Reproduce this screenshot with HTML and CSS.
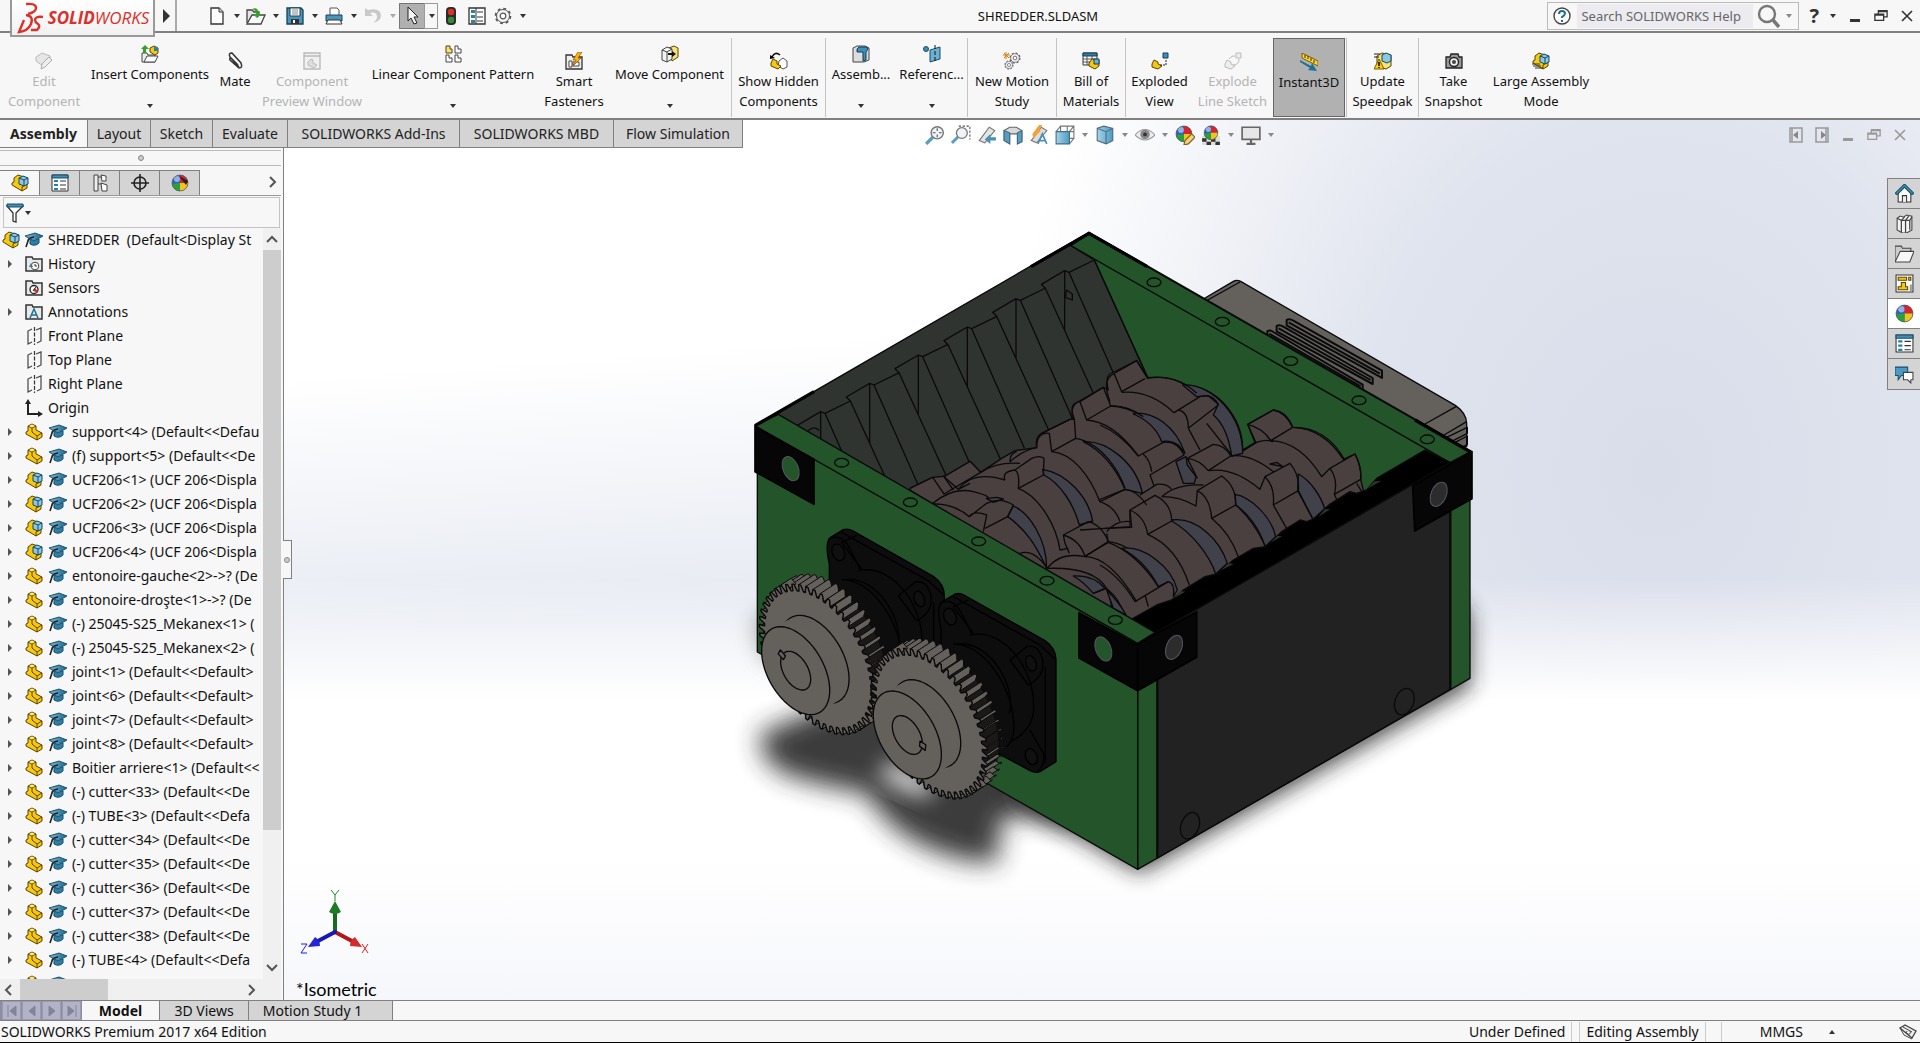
FILE: index.html
```html
<!DOCTYPE html>
<html lang="en">
<head>
<meta charset="utf-8">
<title>SHREDDER.SLDASM</title>
<link rel="stylesheet" href="styles.css">
</head>
<body>
<svg class="defs" aria-hidden="true">
  <defs>
    <linearGradient id="capg" x1="0" x2="1"><stop offset="0" stop-color="#7fb9d6"/><stop offset="1" stop-color="#1d6285"/></linearGradient>
    <linearGradient id="blueg" x1="0" x2="1"><stop offset="0" stop-color="#a9d3e8"/><stop offset="1" stop-color="#4d9bc2"/></linearGradient>
    <symbol id="part" viewBox="0 0 18 18"><path d="M1 9l2-1V3l4-2 4 2v4l6 3v4l-5 3L1 11z" fill="#f6c90e" stroke="#5b4300"/><path d="M3 3l4 2 4-2M7 5v4l5 4 5-3M12 13v4" fill="none" stroke="#5b4300"/><path d="M7 1.500l3 1.500-3 1.500L4 3z" fill="#ffe98a"/></symbol>
    <symbol id="assy" viewBox="0 0 18 18"><path d="M1 9l2-1V4l4-3 9 3v10l-5 3L1 11z" fill="#f6c90e" stroke="#5b4300"/><path d="M11 17v-4l5-3" fill="none" stroke="#5b4300"/><path d="M8 4l4-2 5 2v6l-4 2-5-2z" fill="#8ec7e2" stroke="#124863"/><path d="M8 4l5 2 4-2M13 6v6" fill="none" stroke="#124863"/></symbol>
    <symbol id="cap" viewBox="0 0 20 16"><path d="M6 7v5q5 3 9-1V7z" fill="#2e7ea6" stroke="#174f6c"/><path d="M1 4l10-3 8 3-9 5z" fill="url(#capg)" stroke="#1c5674"/><path d="M10 5Q4 6 4 9l-2 6" fill="none" stroke="#222" stroke-width="1.600"/></symbol>
    <symbol id="plane" viewBox="0 0 18 18"><path d="M7 2L3 4v13l4-2M11 3l5-2v13l-4 2" fill="none" stroke="#444" stroke-width="1.200"/><path d="M9.500 0v18" fill="none" stroke="#333" stroke-width="1.200" stroke-dasharray="4 1.500"/></symbol>
    <symbol id="folder" viewBox="0 0 18 18"><path d="M1 16V2h6l1 2h9v12z" fill="#e9e9e9" stroke="#333" stroke-width="1.500"/></symbol>
    <symbol id="list" viewBox="0 0 18 18"><path d="M1 1h16v16H1z" fill="#fff" stroke="#333"/><path d="M1 1h16v3H1z" fill="#3d8fb8" stroke="#174f6c"/><path d="M3 6h4v2H3zM3 10h4v2H3zM3 14h4v2H3z" fill="#2e7ea6"/><path d="M9 7h6M9 11h6M9 15h6" stroke="#333"/></symbol>
    <symbol id="ball" viewBox="0 0 18 18"><circle cx="9" cy="9" r="8" fill="#2b62c4"/><path d="M9 9V1a8 8 0 0 1 8 8z" fill="#d8232a"/><path d="M9 9h8a8 8 0 0 1-8 8z" fill="#f0c419"/><path d="M9 9v8a8 8 0 0 1-8-7z" fill="#2aa03a"/><circle cx="6" cy="5" r="3" fill="#fff" opacity=".5"/><circle cx="9" cy="9" r="8" fill="none" stroke="#555" stroke-width=".7"/></symbol>
    <symbol id="cog" viewBox="0 0 18 18"><circle cx="9" cy="9" r="6.500" fill="#f5f5f5" stroke="#555" stroke-width="1"/><circle cx="9" cy="9" r="7.500" fill="none" stroke="#555" stroke-width="1.600" stroke-dasharray="3 2.900"/><circle cx="9" cy="9" r="2.800" fill="#fff" stroke="#555" stroke-width="1.200"/></symbol>
    <symbol id="lens" viewBox="0 0 18 18"><path d="M1 17l6-6" stroke="#5b9cc0" stroke-width="3"/><circle cx="11" cy="7" r="5.500" fill="#eef3f7" stroke="#777" stroke-width="1.300"/></symbol>
    <symbol id="restore" viewBox="0 0 16 14"><path d="M5 4V1h10v7h-4M1 5h10v7H1zM1 6h10M5 2h10" fill="none" stroke="currentColor" stroke-width="1.500"/></symbol>
    <symbol id="cross" viewBox="0 0 12 12"><path d="M1 1l10 10M11 1L1 11" fill="none" stroke="currentColor" stroke-width="1.600"/></symbol>
    <symbol id="minus" viewBox="0 0 12 12"><path d="M1 9h10v3H1z" fill="currentColor"/></symbol>
  </defs>
</svg>

<header class="titlebar">
  <a class="logo" href="#" aria-label="SOLIDWORKS">
    <svg width="28" height="32" viewBox="0 0 28 32"><path d="M10 2q10-1 10 4 0 4-8 6M10 13q8 1 5 9-3 7-12 8l5-12" fill="none" stroke="#d8322b" stroke-width="2.400"/><path d="M27 15q-8-1-8 3 0 2 3 4t-1 6h-6" fill="none" stroke="#d8322b" stroke-width="2.400"/></svg>
    <span class="brand"><b>SOLID</b>WORKS</span>
  </a>
  <button class="more" aria-label="Show menu"><svg width="8" height="14"><path d="M1 0l7 7-7 7z" fill="#333"/></svg></button>
  <div class="quick">
    <button aria-label="New"><svg viewBox="0 0 18 18"><path d="M3 1h8l4 4v12H3z" fill="#fff" stroke="#333" stroke-width="1.300"/><path d="M11 1v4h4" fill="#ddd" stroke="#333"/></svg></button><i class="dd"></i>
    <button aria-label="Open"><svg viewBox="0 0 20 18"><path d="M1 16V3h5l2 2h5v3" fill="#e5e5e5" stroke="#444" stroke-width="1.300"/><path d="M1 17L6 8h13l-4 9z" fill="#fafafa" stroke="#444" stroke-width="1.300"/><path d="M6 2q6-3 7 5h3l-5 4-4-4h3q0-4-4-5z" fill="#35a02b"/></svg></button><i class="dd"></i>
    <button aria-label="Save"><svg viewBox="0 0 18 18"><path d="M1 1h14l2 2v14H1z" fill="#4c93ba" stroke="#16425a" stroke-width="1.300"/><path d="M4 1h10v8H4z" fill="#fff" stroke="#16425a"/><path d="M6 3h6M6 5h6M6 7h6" stroke="#888"/><path d="M5 12h8v5H5z" fill="#333"/><path d="M7 13h2v3H7z" fill="#fff"/></svg></button><i class="dd"></i>
    <button aria-label="Print"><svg viewBox="0 0 18 18"><path d="M5 8V1h7l2 2v5" fill="#fff" stroke="#555"/><path d="M1 8h16v6H1z" fill="#4c93ba" stroke="#16425a"/><path d="M3 13h12l2 4H1z" fill="#fff" stroke="#333"/></svg></button><i class="dd"></i>
    <button aria-label="Undo"><svg viewBox="0 0 18 18"><path d="M1 1v8h8L6 6q7-2 7 4 0 3-4 6 8-2 8-7 0-9-13-6z" fill="#c9c9c9"/></svg></button><i class="dd dim"></i>
    <button class="pick" aria-label="Select"><svg viewBox="0 0 18 18"><path d="M5 0v14l3-3 3 6 3-1-3-6h4z" fill="#f4f4f4" stroke="#222"/></svg></button><i class="pickdd"><i class="dd"></i></i>
    <button aria-label="Rebuild"><svg viewBox="0 0 18 18"><rect x="4" y="0" width="10" height="18" rx="4" fill="#2b2b2b"/><circle cx="9" cy="5" r="3.200" fill="#e03026"/><circle cx="9" cy="13" r="3.200" fill="#2f8f36"/></svg></button>
    <button aria-label="File properties"><svg viewBox="0 0 18 18"><path d="M1 1h16v16H1z" fill="#fff" stroke="#333" stroke-width="1.300"/><path d="M3 3h4v3H3zM3 8h4v3H3zM3 13h4v3H3z" fill="#2e7ea6"/><path d="M9 5h6M9 10h6M9 14h6M8 1v16" stroke="#333"/></svg></button>
    <button aria-label="Options"><svg><use href="#cog"/></svg></button><i class="dd"></i>
  </div>
  <h1>SHREDDER.SLDASM</h1>
  <div class="right">
    <form class="search">
      <svg width="18" height="18" viewBox="0 0 18 18"><circle cx="9" cy="9" r="8" fill="#fff" stroke="#444" stroke-width="1.400"/><path d="M6 7q0-3 3-3t3 2.500q0 1.500-3 3.500v1M9 13v2" fill="none" stroke="#1d6f98" stroke-width="2"/></svg>
      <input type="text" aria-label="Search SOLIDWORKS Help" placeholder="Search SOLIDWORKS Help">
      <button aria-label="Search"><svg width="24" height="24" viewBox="0 0 24 24"><circle cx="10" cy="10" r="8" fill="none" stroke="#777" stroke-width="2.400"/><path d="M16 16l6 7" stroke="#777" stroke-width="3.500"/></svg></button><i class="dd grey"></i>
    </form>
    <button class="help" aria-label="Help">?</button><i class="dd"></i>
    <button class="win" aria-label="Minimize"><svg width="12" height="12"><use href="#minus"/></svg></button>
    <button class="win" aria-label="Restore"><svg width="14" height="14"><use href="#restore"/></svg></button>
    <button class="win" aria-label="Close"><svg width="12" height="12"><use href="#cross"/></svg></button>
  </div>
</header>

<nav class="ribbon" aria-label="Assembly commands">
  <button class="off"><svg viewBox="0 0 18 18"><path d="M1 5l6-4 8 3v6l-7 4-7-5z" fill="#e6e6e6" stroke="#bbb"/><path d="M6 17l1-5 7-7 3 3-7 7z" fill="#eee" stroke="#aaa"/></svg>Edit<br>Component</button>
  <button class="drop"><svg viewBox="0 0 18 18"><path d="M1 17V8h5l1 2h7v7z" fill="#eee" stroke="#444"/><path d="M3 17l3-6h11l-3 6z" fill="#fff" stroke="#444"/><path d="M2 8V4H0l4-4 4 4H5v4z" fill="#35a02b"/><path d="M9 3l4-2 4 2v5l-3 2-5-3z" fill="#f6c90e" stroke="#5b4300"/><path d="M13 2h4v4h-4z" fill="#2e7ea6"/></svg>Insert Components<i class="dd"></i></button>
  <button class="one"><svg viewBox="0 0 18 18"><path d="M13 15L4 5q-2-4 2-4l9 10q2 5-2 5L4 8q-1-2 1-2l7 7" fill="none" stroke="#333" stroke-width="1.500"/></svg>Mate</button>
  <button class="off"><svg viewBox="0 0 18 18"><path d="M1 1h16v16H1zM1 4h16" fill="#f0f0f0" stroke="#bbb" stroke-width="1.400"/><path d="M5 10l3-3 2 1v3l4 2-3 3-6-3z" fill="#ddd" stroke="#bbb"/></svg>Component<br>Preview Window</button>
  <button class="drop"><svg viewBox="0 0 18 18"><path d="M2 1h4v3h2v4H2z" fill="#f6e27a" stroke="#5b4300"/><path d="M11 1h3v3h3v4h-6zM2 10h3v3h3v4H2zM11 10h3v3h3v4h-6z" fill="#fff" stroke="#444"/></svg>Linear Component Pattern<i class="dd"></i></button>
  <button><svg viewBox="0 0 18 18"><path d="M1 3h6l1 2h9v12H1z" fill="#eee" stroke="#333" stroke-width="1.300"/><path d="M4 9h3v6H4zM8 10h6v4H8z" fill="#fff" stroke="#444"/><path d="M13 0L8 8h3l-3 6 8-8h-3l4-6z" fill="#ffb400" stroke="#8a4b00" stroke-width=".7"/></svg>Smart<br>Fasteners</button>
  <button class="drop"><svg viewBox="0 0 18 18"><path d="M8 3l5-2 4 2v9l-6 4z" fill="#f6e27a" stroke="#5b4300"/><path d="M1 5l5-3 5 2v10l-5 3-5-2z" fill="#f2f2f2" stroke="#444"/><path d="M1 5l5 2 5-3M6 7v10" fill="none" stroke="#444"/><path d="M7 8h4V6l4 3-4 3v-2H7z" fill="#111"/></svg>Move Component<i class="dd"></i></button>
  <button class="sep"><svg viewBox="0 0 18 18"><path d="M9 9l4-3 4 3v6l-4 2-5-3z" fill="#fff" stroke="#555"/><path d="M1 11l2-4 4 2v3l4 2-3 3-7-3z" fill="#f6c90e" stroke="#5b4300"/><path d="M2 5q3-6 8-2" fill="none" stroke="#111" stroke-width="1.600"/><path d="M0 3l5 3-5 1z"/></svg>Show Hidden<br>Components</button>
  <button class="drop sep"><svg viewBox="0 0 18 18"><path d="M1 3l4-2h8l4 2v12l-5 2H1z" fill="#ddd" stroke="#444"/><path d="M5 4l2-2h8l1 2-2 3v8l-3 1V7H5z" fill="#3d8fb8" stroke="#123f58"/></svg>Assemb...<i class="dd"></i></button>
  <button class="drop"><svg viewBox="0 0 18 18"><circle cx="3" cy="4" r="2.500" fill="#3d8fb8" stroke="#174f6c"/><path d="M7 5l10-3v12L7 17z" fill="#6db1d2" stroke="#174f6c"/><path d="M12 0v18" stroke="#111" stroke-dasharray="4 2"/></svg>Referenc...<i class="dd"></i></button>
  <button class="sep"><svg viewBox="0 0 18 18"><use href="#cog" x="6" y="0" width="12" height="12"/><use href="#cog" x="1" y="8" width="10" height="10"/><path d="M3 0v7M0 3h7M1 1l5 5M6 1L1 6" stroke="#e07b00"/></svg>New Motion<br>Study</button>
  <button class="sep"><svg viewBox="0 0 18 18"><path d="M1 1h14v12H1z" fill="#fff" stroke="#333"/><path d="M1 1h14v3H1z" fill="#2e7ea6" stroke="#123f58"/><path d="M1 7h14M1 10h14M5 4v9M10 4v9" stroke="#555"/><path d="M7 11l3-4 7 1v6l-4 3-6-3z" fill="#f6c90e" stroke="#5b4300"/><path d="M12 7h5v5h-5z" fill="#6db1d2" stroke="#123f58"/></svg>Bill of<br>Materials</button>
  <button class="sep"><svg viewBox="0 0 18 18"><path d="M1 12l2-4 4 2v2l4 2-4 3-6-2z" fill="#f6c90e" stroke="#5b4300"/><path d="M12 1h5v5h-5z" fill="#3d8fb8" stroke="#123f58"/><path d="M9 13h6V8" fill="none" stroke="#222" stroke-dasharray="2 1"/></svg>Exploded<br>View</button>
  <button class="off"><svg viewBox="0 0 18 18"><path d="M1 12l2-4 4 2v2l4 2-4 3-6-2z" fill="#eee" stroke="#bbb"/><path d="M12 1h5v5h-5z" fill="#eee" stroke="#bbb"/><path d="M9 13q6 0 6-6M5 7q3-4 6-3" fill="none" stroke="#bbb"/></svg>Explode<br>Line Sketch</button>
  <button class="sep on one"><svg viewBox="0 0 18 18"><path d="M2 0l16 8v5L2 5z" fill="#ffd632" stroke="#7a5b00"/><path d="M5 2v3M8 3v3M11 5v3M14 7v3" stroke="#333"/><path d="M0 7l11 6 1-3 5 8-9-1 2-2L0 9z" fill="#1d6f98"/></svg>Instant3D</button>
  <button class="sep"><svg viewBox="0 0 18 18"><path d="M3 4l5-3 9 2v11l-5 3-9-3z" fill="#f6e27a" stroke="#5b4300"/><path d="M8 3l4-2 5 2v6l-4 2-5-2z" fill="#8ec7e2" stroke="#124863"/><path d="M0 2h6M0 5h5" stroke="#222"/><path d="M5 7l5 10H0z" fill="#ffcf00" stroke="#7a5b00"/><path d="M5 10v4M5 15v1" stroke="#000" stroke-width="1.500"/></svg>Update<br>Speedpak</button>
  <button class="sep"><svg viewBox="0 0 18 18"><path d="M1 5h4l1-3h7l1 3h3v11H1z" fill="#999" stroke="#222" stroke-width="1.300"/><circle cx="9" cy="10" r="4.500" fill="#eee" stroke="#222" stroke-width="1.400"/><circle cx="9" cy="10" r="2" fill="#444"/></svg>Take<br>Snapshot</button>
  <button><svg viewBox="0 0 18 18"><use href="#assy"/><path d="M0 12h8M1 14h8M3 16h8" stroke="#333"/></svg>Large Assembly<br>Mode</button>
</nav>

<main>
  <nav class="cmdtabs" aria-label="Command tabs">
    <button class="cur">Assembly</button><button>Layout</button><button>Sketch</button><button>Evaluate</button><button>SOLIDWORKS Add-Ins</button><button>SOLIDWORKS MBD</button><button>Flow Simulation</button>
  </nav>

  <aside class="panel">
    <div class="grip"><i class="dot"></i></div>
    <div class="ptabs">
      <button class="cur" aria-label="Feature tree"><svg><use href="#assy"/></svg></button>
      <button aria-label="Properties"><svg><use href="#list"/></svg></button>
      <button aria-label="Configurations"><svg viewBox="0 0 18 18"><path d="M3 1h4v16H3zM7 3h3M7 10h3" fill="#eee" stroke="#444"/><path d="M10 1l5 1v5h-4zM10 9l6 2v6h-5z" fill="#fff" stroke="#444"/></svg></button>
      <button aria-label="Dimensions"><svg viewBox="0 0 18 18"><circle cx="9" cy="9" r="6" fill="none" stroke="#222" stroke-width="1.600"/><path d="M9 0v18M0 9h18" stroke="#222" stroke-width="1.600"/></svg></button>
      <button aria-label="Display"><svg viewBox="0 0 18 18"><use href="#ball"/><path d="M8 2l9 5-2 4z" fill="#222"/></svg></button>
      <span class="chev"><svg width="8" height="12"><path d="M1 1l5 5-5 5" fill="none" stroke="#555" stroke-width="2"/></svg></span>
    </div>
    <div class="filter"><svg width="18" height="20" viewBox="0 0 18 20"><path d="M1 3l6 7v8l3 1v-9l7-7z" fill="#fff" stroke="#333" stroke-width="1.300"/><path d="M1 1h16v3H1z" fill="#3d8fb8" stroke="#174f6c"/></svg><i class="dd"></i></div>
    <div class="treewrap">
      <ul class="tree">
        <li class="root"><svg><use href="#assy"/></svg><svg><use href="#cap"/></svg><span>SHREDDER&nbsp; (Default&lt;Display St</span></li>
        <li><i class="tw"></i><svg viewBox="0 0 18 18"><use href="#folder"/><circle cx="10" cy="11" r="3.800" fill="#fff" stroke="#444"/><path d="M10 9v2h2" fill="none" stroke="#333"/><path d="M4 12l2-4 2 4z" fill="#2e7ea6"/></svg><span>History</span></li>
        <li><i class="tw no"></i><svg viewBox="0 0 18 18"><use href="#folder"/><circle cx="9" cy="10.500" r="4" fill="#fff" stroke="#222" stroke-width="1.300"/><path d="M9 10l3 3" stroke="#e03026" stroke-width="2.500"/><path d="M8 12l3-4" stroke="#222"/></svg><span>Sensors</span></li>
        <li><i class="tw"></i><svg viewBox="0 0 18 18"><use href="#folder"/><path d="M5 15l4-9 4 9M6.500 12h5" fill="none" stroke="#1d6f98" stroke-width="1.500"/></svg><span>Annotations</span></li>
        <li><i class="tw no"></i><svg><use href="#plane"/></svg><span>Front Plane</span></li>
        <li><i class="tw no"></i><svg><use href="#plane"/></svg><span>Top Plane</span></li>
        <li><i class="tw no"></i><svg><use href="#plane"/></svg><span>Right Plane</span></li>
        <li><i class="tw no"></i><svg viewBox="0 0 18 18"><path d="M3 3v12h11" fill="none" stroke="#222" stroke-width="2"/><path d="M0 5l3-5 3 5zM13 12l5 3-5 3z" fill="#222"/></svg><span>Origin</span></li>
        <li><i class="tw"></i><svg><use href="#part"/></svg><svg><use href="#cap"/></svg><span>support&lt;4&gt; (Default&lt;&lt;Defau</span></li>
        <li><i class="tw"></i><svg><use href="#part"/></svg><svg><use href="#cap"/></svg><span>(f) support&lt;5&gt; (Default&lt;&lt;De</span></li>
        <li><i class="tw"></i><svg><use href="#assy"/></svg><svg><use href="#cap"/></svg><span>UCF206&lt;1&gt; (UCF 206&lt;Displa</span></li>
        <li><i class="tw"></i><svg><use href="#assy"/></svg><svg><use href="#cap"/></svg><span>UCF206&lt;2&gt; (UCF 206&lt;Displa</span></li>
        <li><i class="tw"></i><svg><use href="#assy"/></svg><svg><use href="#cap"/></svg><span>UCF206&lt;3&gt; (UCF 206&lt;Displa</span></li>
        <li><i class="tw"></i><svg><use href="#assy"/></svg><svg><use href="#cap"/></svg><span>UCF206&lt;4&gt; (UCF 206&lt;Displa</span></li>
        <li><i class="tw"></i><svg><use href="#part"/></svg><svg><use href="#cap"/></svg><span>entonoire-gauche&lt;2&gt;-&gt;? (De</span></li>
        <li><i class="tw"></i><svg><use href="#part"/></svg><svg><use href="#cap"/></svg><span>entonoire-droşte&lt;1&gt;-&gt;? (De</span></li>
        <li><i class="tw"></i><svg><use href="#part"/></svg><svg><use href="#cap"/></svg><span>(-) 25045-S25_Mekanex&lt;1&gt; (</span></li>
        <li><i class="tw"></i><svg><use href="#part"/></svg><svg><use href="#cap"/></svg><span>(-) 25045-S25_Mekanex&lt;2&gt; (</span></li>
        <li><i class="tw"></i><svg><use href="#part"/></svg><svg><use href="#cap"/></svg><span>joint&lt;1&gt; (Default&lt;&lt;Default&gt;</span></li>
        <li><i class="tw"></i><svg><use href="#part"/></svg><svg><use href="#cap"/></svg><span>joint&lt;6&gt; (Default&lt;&lt;Default&gt;</span></li>
        <li><i class="tw"></i><svg><use href="#part"/></svg><svg><use href="#cap"/></svg><span>joint&lt;7&gt; (Default&lt;&lt;Default&gt;</span></li>
        <li><i class="tw"></i><svg><use href="#part"/></svg><svg><use href="#cap"/></svg><span>joint&lt;8&gt; (Default&lt;&lt;Default&gt;</span></li>
        <li><i class="tw"></i><svg><use href="#part"/></svg><svg><use href="#cap"/></svg><span>Boitier arriere&lt;1&gt; (Default&lt;&lt;</span></li>
        <li><i class="tw"></i><svg><use href="#part"/></svg><svg><use href="#cap"/></svg><span>(-) cutter&lt;33&gt; (Default&lt;&lt;De</span></li>
        <li><i class="tw"></i><svg><use href="#part"/></svg><svg><use href="#cap"/></svg><span>(-) TUBE&lt;3&gt; (Default&lt;&lt;Defa</span></li>
        <li><i class="tw"></i><svg><use href="#part"/></svg><svg><use href="#cap"/></svg><span>(-) cutter&lt;34&gt; (Default&lt;&lt;De</span></li>
        <li><i class="tw"></i><svg><use href="#part"/></svg><svg><use href="#cap"/></svg><span>(-) cutter&lt;35&gt; (Default&lt;&lt;De</span></li>
        <li><i class="tw"></i><svg><use href="#part"/></svg><svg><use href="#cap"/></svg><span>(-) cutter&lt;36&gt; (Default&lt;&lt;De</span></li>
        <li><i class="tw"></i><svg><use href="#part"/></svg><svg><use href="#cap"/></svg><span>(-) cutter&lt;37&gt; (Default&lt;&lt;De</span></li>
        <li><i class="tw"></i><svg><use href="#part"/></svg><svg><use href="#cap"/></svg><span>(-) cutter&lt;38&gt; (Default&lt;&lt;De</span></li>
        <li><i class="tw"></i><svg><use href="#part"/></svg><svg><use href="#cap"/></svg><span>(-) TUBE&lt;4&gt; (Default&lt;&lt;Defa</span></li>
        <li><i class="tw no"></i><svg><use href="#part"/></svg><svg><use href="#cap"/></svg></li>
      </ul>
      <div class="vbar"><svg width="12" height="8"><path d="M1 7l5-5 5 5" fill="none" stroke="#555" stroke-width="2"/></svg><i class="vthumb"></i><svg width="12" height="8"><path d="M1 1l5 5 5-5" fill="none" stroke="#555" stroke-width="2"/></svg></div>
    </div>
    <div class="hbar"><svg width="8" height="12"><path d="M7 1L2 6l5 5" fill="none" stroke="#555" stroke-width="2"/></svg><i class="hthumb"></i><svg width="8" height="12"><path d="M1 1l5 5-5 5" fill="none" stroke="#555" stroke-width="2"/></svg></div>
    <button class="split" aria-label="Collapse panel"><i class="dot small"></i></button>
  </aside>

  <section class="view" aria-label="Graphics area">
    <svg class="model" viewBox="284 120 1636 880">
      <defs>
        <filter id="soft" x="-30%" y="-30%" width="160%" height="160%"><feGaussianBlur stdDeviation="38"/></filter>
        <filter id="soft2" x="-60%" y="-60%" width="220%" height="220%"><feGaussianBlur stdDeviation="32"/></filter>
        <g id="rib"><path d="M89-32L13 5 0 0-70 41-58 53 110 420M0 0V178M13 5L171 363" /></g>
        <g id="mount" stroke="#000" stroke-width="4">
          <path d="M603 640V385Q588 320 607 305L645 282Q660 278 672 285L915 422Q948 445 948 480V785L900 815Q885 820 870 812L700 720Z" fill="#0d0d0d"/>
          <path d="M640 290L900 435 948 480M916 500V790M810 480L860 440Q895 430 908 480 915 530 865 555ZM690 405C800 380 900 530 878 650Q865 700 810 725M640 432C730 430 820 560 822 680Q822 720 800 740M650 432C750 420 830 560 808 640M685 300L640 320 700 400M600 310Q640 290 665 340L695 400M870 690L910 760Q915 800 890 817" fill="none"/>
          <ellipse cx="630" cy="350" rx="18" ry="26" transform="rotate(-22 630 350)" fill="#101010"/><ellipse cx="873" cy="490" rx="15" ry="24" transform="rotate(-20 873 490)" fill="#101010"/><ellipse cx="874" cy="770" rx="17" ry="25" transform="rotate(-22 874 770)" fill="#101010"/>
        </g>
      </defs>
      <g class="ink" transform="translate(740 220) scale(.33333)">
        <!-- floor shadows -->
        <g stroke="none">
          <path d="M60 1540Q60 1640 160 1670T380 1720Q450 1840 580 1890T780 1920Q760 1800 820 1780L1000 1810 1100 1700 400 1400Z" fill="#303030" filter="url(#soft)" opacity=".95"/>
          <ellipse cx="500" cy="1680" rx="90" ry="34" transform="rotate(25 500 1680)" fill="#fff" filter="url(#soft2)" opacity=".8"/>
          <path d="M780 1720L1200 1960 2190 1400V1180L2100 1100 1150 1700Z" fill="#222" filter="url(#soft2)" opacity=".8"/>
          <path d="M40 1200L70 1320 200 1340V1100Z" fill="#777" filter="url(#soft2)" opacity=".6"/>
        </g>
        <!-- motor -->
        <path d="M1390 237L1480 184Q1490 178 1502 184L2146 556Q2180 580 2180 610V680L2050 700Z" fill="#64605c"/>
        <path d="M1398 243L1500 186M2055 612L2148 560M2112 645L2180 605M2120 652L2182 622V640L2135 664M2140 670L2182 648V674L2160 684" fill="none"/>
        <g fill="#64605c" stroke-width="6"><path d="M1640 300Q1648 294 1660 302L1926 452V474L1640 316ZM1610 318Q1618 312 1630 320L1898 474V492L1610 334ZM1582 334Q1590 328 1600 336L1868 494V510L1582 350Z"/><path d="M1646 307L1920 461M1616 325L1892 480M1588 341L1862 499" fill="none"/></g>
        <!-- hopper walls -->
        <path d="M1047 37L2195 695 2130 735 2000 800 1870 900H1500L1220 473 990 80Z" fill="#24542a"/>
        <path d="M45 617L1047 37 993 77 1063 120 1240 510 640 900 110 590Z" fill="#303431"/>
        <path d="M1047 40L2192 695 2130 728 993 77Z" fill="#24542a"/>
        <path d="M1063 120L1240 510" fill="none"/>
        <g fill="none"><use href="#rib" x="974" y="152"/><use href="#rib" x="828" y="236"/><use href="#rib" x="682" y="321"/><use href="#rib" x="535" y="405"/><use href="#rib" x="389" y="490"/><use href="#rib" x="242" y="575"/><path d="M980 210L997 222V240L976 232ZM205 632Q222 615 238 632"/></g>
        <!-- cutters -->
        <path d="M510 805L578 772 622 768 690 724 722 757 785 715 825 692 890 683Q885 650 905 640L990 598H1003Q990 560 1003 552L1090 502 1105 510Q1095 475 1110 462L1190 422 1222 473Q1290 465 1340 497C1430 500 1508 590 1508 690L1545 668 1523 613 1600 570Q1640 575 1658 622 1750 625 1810 718L1845 702Q1865 740 1862 778L1875 830 1200 1230 510 810Z" fill="#4a403f"/>
        <path d="M510 805L578 772 612 822 722 757 690 724 612 770 640 810" fill="#4a403f"/>
        <g fill="#40414b">
          <path d="M1030 665C1100 660 1190 730 1207 820L1155 808C1130 750 1090 695 1030 665Z"/>
          <path d="M908 748C980 760 1045 830 1058 903L1018 915C1000 850 960 790 912 765Z"/>
          <path d="M820 858C870 880 920 960 920 1045 890 980 860 930 803 890Z"/>
          <path d="M1000 1068Q1060 1065 1095 1105L1060 1120Q1030 1085 1000 1068Z"/>
          <path d="M740 835l30-3 20 5-30 10zM1105 1110Q1140 1140 1150 1180L1115 1160Z"/>
        </g>
        <g fill="none">
          <path d="M1110 545Q1085 480 1120 462L1190 422 1222 473M1122 460L1145 515 1215 476"/>
          <path d="M1020 545L1090 502 1112 558 1040 600 1020 545Q990 550 997 600"/>
          <path d="M905 640L990 598H1003L1007 655 935 695 928 640Q890 635 890 683M1007 655C1090 670 1140 760 1155 805M935 695C1000 700 1050 770 1080 845L1155 808"/>
          <path d="M1040 600Q1120 605 1195 708M1112 558Q1160 555 1210 590"/>
          <path d="M830 695Q810 700 810 725 850 690 890 683M722 757Q770 725 840 730M795 780Q785 755 825 750L875 715Q900 705 912 715L910 765 835 805Q840 760 825 750M835 805C900 830 950 920 960 990L985 985M655 808Q700 750 795 780M612 770L655 808 690 790"/>
          <path d="M578 850Q640 800 700 815T740 838M580 852Q640 850 688 890 700 870 740 885L730 935M688 890L740 850Q780 830 820 855L803 890 735 925M688 890L700 880"/>
          <path d="M970 945L1045 905Q1085 915 1105 965L1035 1010Q1020 960 970 945L975 970 988 1000M922 1045Q960 995 1035 1010 1110 1010 1190 1145M1105 965Q1160 970 1215 1030M922 1045Q1060 1040 1100 1105M840 1000Q880 985 922 1045M1060 1120L1100 1105Q1120 1130 1118 1150M1095 925L1170 920V870M1080 845Q1125 860 1140 905"/>
        </g>
        <g transform="translate(1080 0)">
          <g fill="#40414b">
            <path d="M248 495C340 490 428 590 428 700L395 708C388 660 370 610 340 585L355 553 325 527 290 530Z"/>
            <path d="M100 580C160 575 225 615 255 700L235 675Q210 660 185 665 165 610 100 582ZM228 725L258 710 262 735 288 770 283 790H250Z"/>
            <path d="M510 732L530 727 548 740ZM595 762C630 780 665 830 675 870L640 900 593 812Z"/>
            <path d="M405 823C450 830 515 890 527 950L495 980C480 930 445 880 407 855Z"/>
            <path d="M215 900C290 890 360 960 382 1030L347 1062C330 1010 280 940 215 903Z"/>
            <path d="M65 985C130 975 215 1040 232 1110L220 1130Q225 1090 205 1085L175 1100C150 1050 110 1010 65 985Z"/>
            <path d="M20 1110Q60 1150 78 1185L40 1165Z"/>
          </g>
          <g fill="none">
            <path d="M65 517Q150 510 222 578L300 530Q340 520 355 555L265 625Q265 575 235 570M265 625L300 690M320 610L395 705M140 475Q230 460 290 520"/>
            <path d="M0 615Q60 640 115 708L190 667Q230 660 252 705L150 765 162 797M30 558Q80 558 130 590M130 703Q150 720 155 755M-5 840L75 808Q110 810 140 855M120 825L170 793Q200 790 215 808"/>
            <path d="M443 613L520 570Q555 575 578 622L512 662Q490 625 443 613L468 668 430 692M512 662Q600 665 665 770L690 745 765 702Q785 740 782 778L703 823Q715 780 690 745M578 622Q680 620 735 722M703 823L715 850M770 790L790 822"/>
            <path d="M262 715L340 673Q375 675 392 708L325 752Q300 720 262 715L292 775M325 752Q400 740 480 808L495 770 570 730Q600 765 595 812L520 855Q525 800 495 770M392 708Q450 700 520 755M430 692Q480 650 520 665M520 855L560 925M595 812L640 900"/>
            <path d="M185 830Q230 790 310 795M185 830Q240 830 288 858L292 812 365 768Q410 800 407 855L335 895Q330 830 292 812M335 895Q390 940 415 1010M407 855Q460 900 497 980"/>
            <path d="M-60 930L15 925 95 922 90 870 165 826Q215 850 215 903L143 943Q135 890 90 870M143 943Q230 980 268 1095M20 935Q50 900 90 905M25 967Q110 1000 175 1100M0 1035Q60 1070 105 1145L205 1085M145 1160L135 1125M20 940L25 967-45 1008"/>
          </g>
          <path d="M1050 727L975 690 830 775 800 810 770 820 750 815 690 852 640 897 620 905 600 900 545 935 497 980 460 985 400 1020 350 1062 315 1070 250 1110 215 1140 170 1155 90 1200 165 1240Z" fill="#000"/>
          <path d="M802 806l22-22 20-2zM655 890l20-22 16 0zM512 968l20-20 14 0zM365 1050l20-20 16 2zM222 1135l20-22 14 2z" fill="#303431" stroke="none"/>
        </g>
        <!-- right side panel -->
        <path d="M1193 1270L2190 698V1375L1193 1948Z" fill="#24542a"/>
        <path d="M1252 1236L2131 728V1408L1252 1914Z" fill="#222"/>
        <path d="M1252 1236V1914M2131 728V1408" fill="none" stroke-width="7"/>
        <ellipse cx="1993" cy="1445" rx="28" ry="41" transform="rotate(20 1993 1445)" fill="none"/><ellipse cx="1350" cy="1817" rx="27" ry="41" transform="rotate(20 1350 1817)" fill="none"/>
        <!-- front left side panel -->
        <path d="M52 617L1193 1270V1948L52 1296Z" fill="#24542a"/>
        <path d="M45 617L115 583 1245 1237 1193 1270Z" fill="#24542a"/>
        <path d="M45 617L222 515M873 140L1047 40 1222 140M2025 600L2195 698" fill="none" stroke="#000" stroke-width="10"/>
        <g fill="none"><ellipse cx="305" cy="728" rx="21" ry="13"/><ellipse cx="511" cy="847" rx="21" ry="13"/><ellipse cx="716" cy="964" rx="21" ry="13"/><ellipse cx="921" cy="1082" rx="21" ry="13"/><ellipse cx="1126" cy="1200" rx="21" ry="13"/><ellipse cx="1242" cy="187" rx="21" ry="13"/><ellipse cx="1447" cy="305" rx="21" ry="13"/><ellipse cx="1652" cy="423" rx="21" ry="13"/><ellipse cx="1857" cy="541" rx="21" ry="13"/><ellipse cx="2062" cy="658" rx="21" ry="13"/></g>
        <g fill="#060606" stroke="#000" stroke-width="5"><path d="M45 620L222 718V853L45 755ZM1017 1178L1193 1275V1412L1017 1314ZM1193 1272L1370 1175V1312L1193 1412ZM2018 797L2196 695V836L2024 933Z"/></g>
        <g stroke="#556" stroke-width="3"><ellipse cx="152" cy="746" rx="23" ry="38" transform="rotate(-22 152 746)" fill="#24542a"/><ellipse cx="1090" cy="1287" rx="23" ry="38" transform="rotate(-22 1090 1287)" fill="#24542a"/><ellipse cx="1302" cy="1282" rx="23" ry="38" transform="rotate(22 1302 1282)" fill="#2c2c2c"/><ellipse cx="2096" cy="823" rx="23" ry="38" transform="rotate(22 2096 823)" fill="#2c2c2c"/></g>
        <use href="#mount" x="-335" y="647"/>
        <use href="#mount" x="0" y="840"/>
        <g id="gears"></g>
      </g>
      <!-- axis triad -->
      <g stroke-linecap="round" stroke-width="4" fill="none"><path d="M335 931V908" stroke="#176b1d"/><path d="M335 932L352 941" stroke="#b01818"/><path d="M335 932L318 941" stroke="#1717b5"/></g>
      <path d="M335 901l6 11q-6 4-12 0z" fill="#1e7a26"/><path d="M362 947l-12-1q0-6 5-9z" fill="#d42a2a"/><path d="M308 947l12-1q0-6-5-9z" fill="#2424d8"/>
      <path d="M331 890l4 5 4-5M335 895v6" stroke="#1e8a26" fill="none"/><path d="M362 944l6 9M368 944l-6 9" stroke="#e02020" fill="none"/><path d="M301 944h6l-6 9h6" stroke="#1c1cff" fill="none"/>
    </svg>
    <p class="viewname">*Isometric</p>
    <div class="hud">
      <button aria-label="Zoom to fit"><svg viewBox="0 0 18 18"><use href="#lens"/><path d="M11 3v8M7 7h8" stroke="#555" stroke-dasharray="2.500 3"/></svg></button>
      <button aria-label="Zoom to area"><svg viewBox="0 0 18 18"><path d="M7 1h10v12" fill="none" stroke="#555" stroke-dasharray="2 1.500"/><use href="#lens" y="1" width="16" height="16"/></svg></button>
      <button aria-label="Previous view"><svg viewBox="0 0 18 18"><path d="M2 14l9-12 5 3-9 11z" fill="#e4e4e4" stroke="#777"/><path d="M17 11h-5V8l-5 5 5 4v-3h5z" fill="#4d8fb3"/></svg></button>
      <button aria-label="Section view"><svg viewBox="0 0 18 18"><path d="M1 5l5-3h6l5 3v10l-4 2V8H6v9l-5-3z" fill="#d9d9d9" stroke="#666"/><path d="M1 5l5 2v10l-5-3zM13 7l4-2v10l-4 2z" fill="#5b9cc0" stroke="#3c6f8b"/></svg></button>
      <button aria-label="Annotation views"><svg viewBox="0 0 18 18"><path d="M2 14l9-12 5 3-9 11z" fill="#ddd" stroke="#777"/><path d="M3 8l6-8h3L9 5h2L4 12z" fill="#f1a33a"/><path d="M8 17l4-9 4 9M9 14h6" fill="none" stroke="#4d8fb3" stroke-width="1.500"/></svg></button>
      <button aria-label="View orientation"><svg viewBox="0 0 18 18"><path d="M5 1h12v11H5zM1 6l4-5M13 6l4-5M13 17l4-5M11 1v11M5 6h12" fill="none" stroke="#777"/><path d="M1 6h12v11H1z" fill="url(#blueg)" stroke="#3c6f8b"/></svg></button><i class="dd grey"></i>
      <button aria-label="Display style"><svg viewBox="0 0 18 18"><path d="M2 3l6-2 8 2v11l-6 3-8-3z" fill="url(#blueg)" stroke="#4c6f80"/><path d="M2 3l8 3 6-3M10 6v11" fill="none" stroke="#4c6f80"/></svg></button><i class="dd grey"></i>
      <button aria-label="Hide or show items"><svg viewBox="0 0 18 18"><path d="M0 9q9-10 18 0-9 9-18 0z" fill="#eee" stroke="#999"/><circle cx="9" cy="8.500" r="4.300" fill="#888"/><circle cx="9" cy="8.500" r="1.700" fill="#333"/></svg></button><i class="dd grey"></i>
      <button aria-label="Edit appearance"><svg viewBox="0 0 18 18"><use href="#ball" width="16" height="16"/><path d="M8 18l1-4 6-6 3 3-6 6z" fill="#f4d27a" stroke="#7d5a2a"/></svg></button>
      <button aria-label="Apply scene"><svg viewBox="0 0 18 18"><path d="M1 10h16v8H1z" fill="#ddd"/><path d="M1 12h4v3H1zM9 12h4v3H9zM5 15h4v3H5zM13 15h4v3h-4z" fill="#333"/><use href="#ball" x="2" width="14" height="14"/></svg></button><i class="dd grey"></i>
      <button aria-label="View settings"><svg viewBox="0 0 18 18"><path d="M1 2h16v11H1z" fill="#e6e6e6" stroke="#666" stroke-width="1.500"/><path d="M9 13v3M5 17h8" stroke="#666" stroke-width="2"/></svg></button><i class="dd grey"></i>
    </div>
    <div class="docwin">
      <button aria-label="Dock left"><svg width="14" height="16"><path d="M1 1h12v14H1zM3 1v14" fill="none" stroke="#999" stroke-width="1.500"/><path d="M9 4v8L4 8z" fill="#888"/></svg></button>
      <button aria-label="Dock right"><svg width="14" height="16"><path d="M1 1h12v14H1zM11 1v14" fill="none" stroke="#999" stroke-width="1.500"/><path d="M6 4v8l5-4z" fill="#888"/></svg></button>
      <button aria-label="Minimize document"><svg width="12" height="12"><use href="#minus"/></svg></button>
      <button aria-label="Restore document"><svg width="14" height="14"><use href="#restore"/></svg></button>
      <button aria-label="Close document"><svg width="12" height="12"><use href="#cross"/></svg></button>
    </div>
    <nav class="taskpane" aria-label="Task pane">
      <button aria-label="Resources"><svg viewBox="0 0 18 18"><path d="M3 9l6-6 6 6v8H3z" fill="#fff" stroke="#333"/><path d="M7 17v-6h4v6" fill="#eee" stroke="#333"/><path d="M0 9l9-9 9 9-2 1-7-7-7 7z" fill="#3d8fb8" stroke="#174f6c"/></svg></button>
      <button aria-label="Design library"><svg viewBox="0 0 18 18"><path d="M2 4l3-2 3 1 3-2 5 1v13l-5 3H7l-5-3z" fill="#f4f4f4" stroke="#444"/><path d="M2 4l4 2v11M6 6l3-3M6 6h4v12M10 6l3-4M10 6l4 0v9M14 6l2-3" fill="none" stroke="#444" stroke-width="1.200"/></svg></button>
      <button aria-label="File explorer"><svg viewBox="0 0 18 18"><path d="M0 16V2h6l1 2h8v3" fill="#ccc" stroke="#444"/><path d="M0 17L5 7h13l-4 10z" fill="#f7f7f7" stroke="#444"/></svg></button>
      <button aria-label="View palette"><svg viewBox="0 0 18 18"><path d="M1 1h16v16H1z" fill="#fff" stroke="#333"/><path d="M3 3h8v3H3zM13 3h2v3h-2zM6 8h4v4h2v3H3v-3h3z" fill="#f6c90e" stroke="#5b4300"/><path d="M14 10h2v7h-2z" fill="#999"/></svg></button>
      <button class="cur" aria-label="Appearances"><svg><use href="#ball"/></svg></button>
      <button aria-label="Custom properties"><svg><use href="#list"/></svg></button>
      <button aria-label="Forum"><svg viewBox="0 0 18 18"><path d="M0 2h12v8H6l-3 4v-4H0z" fill="#4d9bc2" stroke="#174f6c"/><path d="M8 7h9v7h-2v3l-3-3H8z" fill="#fff" stroke="#444"/></svg></button>
    </nav>
  </section>
</main>

<footer>
  <div class="sheets">
    <div class="nav">
      <button aria-label="First"><svg width="12" height="12"><path d="M2 0v12M10 1v10L4 6z" fill="#83839a" stroke="#83839a"/></svg></button>
      <button aria-label="Previous"><svg width="12" height="12"><path d="M9 1v10L3 6z" fill="#83839a" stroke="#83839a"/></svg></button>
      <button aria-label="Next"><svg width="12" height="12"><path d="M3 1v10l6-5z" fill="#83839a" stroke="#83839a"/></svg></button>
      <button aria-label="Last"><svg width="12" height="12"><path d="M10 0v12M2 1v10l6-5z" fill="#83839a" stroke="#83839a"/></svg></button>
    </div>
    <button class="tab cur">Model</button><button class="tab">3D Views</button><button class="tab">Motion Study 1</button>
  </div>
  <div class="status">
    <span>SOLIDWORKS Premium 2017 x64 Edition</span>
    <span class="cell def">Under Defined</span><span class="cell edit">Editing Assembly</span><span class="cell unit">MMGS</span>
    <i class="up"></i>
    <svg width="18" height="16" viewBox="0 0 18 16"><path d="M1 4l5-3 11 6-4 7z" fill="#eee" stroke="#444" stroke-width="1.300"/><path d="M1 4l4 7 8 4M4 3l9 5M8 7a2 2 0 1 0 3 0" fill="none" stroke="#444"/></svg>
  </div>
</footer>
<script src="gears.js"></script>
</body>
</html>
```
FILE: styles.css
```css
* { box-sizing: border-box; }
body { margin: 0; height: 100vh; display: flex; flex-direction: column; background: #f7f7f7; color: #111; font: 13px/20px "Noto Sans", "Open Sans", sans-serif; overflow: hidden; }
button { font: inherit; color: inherit; background: none; border: 0; padding: 0; display: flex; align-items: center; justify-content: center; white-space: nowrap; }
i { font-style: normal; }
.defs { position: absolute; width: 0; height: 0; }
.dd { display: block; width: 6px; height: 4px; flex: none; border: 3px solid transparent; border-top: 4px solid #333; border-bottom: 0; margin: 0 1px; }
.dd.grey { border-top-color: #888; }
.dd.dim { border-top-color: #aaa; }

.titlebar { height: 33px; flex: none; display: grid; grid-template-columns: 1fr auto 1fr; grid-template-areas: "l t r"; border-bottom: 2px solid #808080; align-items: center; position: relative; }
.logo { position: absolute; left: 10px; top: 0; z-index: 2; width: 145px; height: 37px; display: flex; align-items: center; justify-content: center; gap: 4px; border: 2px solid #999; border-top: 0; background: linear-gradient(#fff, #f1f1f1); color: #d8322b; text-decoration: none; }
.brand { font: italic 17px/24px "Open Sans", sans-serif; }
.more { position: absolute; left: 156px; top: 0; width: 21px; height: 31px; border-right: 2px solid #aaa; }
.quick { grid-area: l; display: flex; align-items: center; gap: 6px; padding-left: 207px; }
.quick button, .quick svg { width: 20px; height: 20px; flex: none; }
.quick button svg { height: 18px; }
.quick .dd { margin-right: 0; }
.quick .pick { width: 26px; height: 26px; background: #b0b0b0; border: 1px solid #777; margin-left: -3px; }
.pickdd { width: 14px; height: 26px; border: 1px solid #999; margin: 0 -3px 0 -7px; display: flex; align-items: center; justify-content: center; }
h1 { grid-area: t; margin: 0; font: inherit; position: relative; left: 78px; }
.right { grid-area: r; display: flex; align-items: center; justify-content: flex-end; padding-right: 5px; gap: 10px; color: #333; }
.search { display: flex; align-items: center; gap: 4px; width: 252px; height: 28px; padding: 0 5px; border: 1px solid #bbb; }
.search svg { flex: none; }
.search input { flex: 1; min-width: 0; height: 24px; border: 0; background: #ececf0; padding: 0 4px; margin-left: 2px; font: inherit; color: #333; }
.search input::placeholder { color: #666; opacity: 1; }
.help { font: bold 20px/24px "Noto Sans", sans-serif; }
.win { width: 16px; height: 20px; }

.ribbon { flex: none; height: 87px; padding-top: 5px; border-bottom: 2px solid #808080; display: grid; grid-template-columns: 88px 124px 46px 108px 174px 68px 123px 94px 71px 71px 89px 69px 68px 79px 74px 72px 70px 106px; }
.ribbon button { display: block; position: relative; height: 79px; padding: 14px 0 6px; text-align: center; }
.ribbon svg { display: block; width: 18px; height: 18px; margin: 0 auto 1px; }
.ribbon .one { padding-bottom: 26px; }
.ribbon .drop { padding: 7px 0 33px; }
.ribbon .drop .dd { position: absolute; left: 50%; bottom: 9px; margin-left: -3px; }
.ribbon .off { color: #b4b4b4; }
.ribbon .sep { border-left: 1px solid #c4c4c4; }
.ribbon .on { background: #b1b1b1; border: 1px solid #666; margin: 0 1px; }

main { flex: 1; min-height: 0; display: grid; grid-template: 28px minmax(0, 1fr) / 284px minmax(0, 1fr); }
.cmdtabs { grid-area: 1 / 1 / 2 / 3; z-index: 2; justify-self: start; display: grid; grid-template-columns: 88px 63px 62px 75px 172px 154px 129px; background: #d4d4d4; border-bottom: 1px solid #808080; font-size: 14px; }
.cmdtabs button { border-right: 1px solid #808080; color: #222; }
.cmdtabs .cur { background: #f7f7f7; font-weight: bold; }

.panel { grid-area: 2 / 1; position: relative; display: flex; flex-direction: column; border-right: 1px solid #808080; min-height: 0; font-size: 14px; }
.grip { height: 16px; margin: 2px 2px 0 0; border-top: 1px solid #bbb; border-bottom: 1px solid #bbb; flex: none; display: flex; align-items: center; justify-content: center; }
.dot { width: 6px; height: 6px; border: 1px solid #888; border-radius: 50%; background: #ccc; }
.ptabs { display: flex; margin: 4px 2px 0 0; height: 26px; flex: none; border-bottom: 1px solid #999; }
.ptabs button { width: 40px; background: #d4d4d4; border: 1px solid #808080; border-left: 0; border-bottom: 0; }
.ptabs .cur { background: #f7f7f7; }
.ptabs button svg { width: 18px; height: 18px; }
.chev { margin-left: auto; padding: 3px 4px 0 0; }
.filter { margin: 1px 3px 0; height: 31px; flex: none; border: 1px solid #c4c4c4; padding: 0 2px; display: flex; align-items: center; }
.treewrap { flex: 1; min-height: 0; display: flex; margin-right: 2px; }
.tree { flex: 1; min-width: 0; margin: 0; padding: 0; list-style: none; overflow: hidden; }
.tree li { display: flex; align-items: center; height: 24px; white-space: nowrap; }
.tree li > svg { width: 20px; height: 18px; flex: none; margin-right: 4px; }
.tree li.root > svg:first-child { margin-left: 1px; margin-right: 3px; }
.tw { width: 16px; height: 8px; flex: none; margin-left: 8px; background: #555; clip-path: polygon(0 0, 4px 50%, 0 100%); }
.tw.no { visibility: hidden; }
.vbar { width: 18px; background: #f0f0f0; display: flex; flex-direction: column; align-items: center; padding: 7px 0; gap: 7px; }
.vthumb { width: 100%; flex: 578; background: #cdcdcd; }
.vbar::after { content: ""; order: 1; flex: 120; }
.vbar svg:last-child { order: 2; }
.hbar { height: 21px; flex: none; margin-right: 2px; background: #f0f0f0; display: flex; align-items: center; padding: 0 25px 0 4px; gap: 8px; }
.hthumb { width: 88px; height: 100%; background: #cdcdcd; margin-right: auto; }
.split { position: absolute; left: 283px; top: 392px; width: 9px; height: 39px; background: #f7f7f7; border: 1px solid #808080; border-left: 0; z-index: 3; }

.view { grid-area: 1 / 2 / 3 / 3; position: relative; min-width: 0; background:
  linear-gradient(rgba(255,255,255,0) 52%, #fff 66%, #fff 84%, #f6f7fb),
  radial-gradient(ellipse 40% 90% at 84% 40%, #d9ddea 0, #e0e4ee 45%, rgba(240,241,246,0) 100%),
  linear-gradient(176deg, #fff 26%, #e6eaf2 52%, #e6eaf2); }
.model { display: block; width: 100%; height: 100%; }
.ink { stroke: #0a0a0a; stroke-width: 4px; stroke-linejoin: round; }
.viewname { position: absolute; left: 12px; bottom: 0; margin: 0; font: 18px/22px Lato, sans-serif; color: #000; }
.hud { position: absolute; top: 5px; left: 0; right: 4px; display: flex; justify-content: center; align-items: center; gap: 6px; }
.hud button, .hud svg { width: 20px; height: 20px; }
.docwin { position: absolute; top: 6px; right: 12px; display: flex; gap: 10px; color: #999; }
.docwin button { width: 16px; height: 18px; }
.taskpane { position: absolute; right: 0; top: 58px; width: 33px; border: 1px solid #808080; border-right: 0; background: #d4d4d4; }
.taskpane button { width: 100%; height: 30px; border-bottom: 1px solid #808080; }
.taskpane button:last-child { border-bottom: 0; }
.taskpane .cur { background: #fff; }
.taskpane svg { width: 19px; height: 19px; }

footer { flex: none; }
.sheets { height: 21px; display: flex; border-top: 1px solid #808080; border-bottom: 1px solid #808080; font-size: 14px; }
.nav { display: flex; padding-left: 2px; background: #8d8da6; }
.nav button { width: 19px; margin-right: 1px; background: #b3b3c8; border: 1px solid #9a9ab2; }
.tab { background: #d4d4d4; border-right: 1px solid #808080; width: 89px; }
.tab.cur { background: #f7f7f7; font-weight: bold; width: 78px; }
.tab:last-child { width: 144px; padding-right: 16px; }
.status { height: 22px; display: flex; align-items: center; font-size: 14px; padding: 1px 3px 0 1px; border-bottom: 1px solid #000; }
.cell { border-right: 1px solid #ccc; padding: 0 6px; text-align: right; }
.def { margin-left: auto; }
.edit { border-left: 1px solid #ccc; margin-left: 7px; }
.unit { border: 0; border-left: 1px solid #ccc; margin-left: 15px; padding-left: 38px; padding-right: 26px; }
.up { border: 3px solid transparent; border-bottom: 4px solid #333; border-top: 0; margin-right: 64px; }
```
FILE: gears.js
```js
// Builds the two spur gears on the drive side, in isometric projection.
const ISO_X = 0.866, ISO_Y = 0.5;
const TEETH = 50, TIP = 202, ROOT = 184, DX = 46, DY = -30;

function project(cx, cy, r, a) {
  return [cx + r * Math.cos(a) * ISO_X, cy + r * Math.cos(a) * ISO_Y + r * Math.sin(a)];
}

function poly(points, fill, width) {
  const d = points.map(p => p.map(v => v.toFixed(1)).join(' ')).join('L');
  return `<path d="M${d}Z" fill="${fill}" stroke-width="${width}"/>`;
}

function ring(cx, cy, r) {
  const points = [];
  for (let i = 0; i < 72; i++) points.push(project(cx, cy, r, i * Math.PI / 36));
  return points;
}

function profile(cx, cy) {
  const points = [], step = 2 * Math.PI / TEETH;
  for (let i = 0; i < TEETH; i++) {
    const a = i * step;
    points.push(project(cx, cy, ROOT, a - step * 0.36), project(cx, cy, TIP, a - step * 0.14),
      project(cx, cy, TIP, a + step * 0.14), project(cx, cy, ROOT, a + step * 0.36));
  }
  return points;
}

function gear(cx, cy, keyAngle) {
  let out = '';
  for (let k = 0; k <= 6; k++) out += poly(ring(cx + DX * k / 6, cy + DY * k / 6, ROOT + 4), '#1a1918', 2);
  const step = 2 * Math.PI / TEETH;
  for (let i = 0; i < TEETH; i++) {
    const a = (i - 18) * step;
    const p = project(cx, cy, TIP, a - step * 0.14), q = project(cx, cy, TIP, a + step * 0.14);
    const r = project(cx, cy, ROOT, a + step * 0.36);
    out += poly([p, q, r, [r[0] + DX, r[1] + DY], [q[0] + DX, q[1] + DY], [p[0] + DX, p[1] + DY]], '#64605c', 3);
  }
  out += poly(profile(cx, cy), '#64605c', 4);
  const hx = cx - 66, hy = cy + 34;
  out += poly(ring(hx + 58, hy - 34, 118), '#64605c', 4);
  for (let k = 1; k <= 20; k++) {
    out += `<g stroke="#64605c">${poly(ring(hx + 58 - 58 * k / 20, hy - 34 + 34 * k / 20, 115), '#64605c', 2)}</g>`;
  }
  out += poly(ring(hx, hy, 118), '#64605c', 4);
  const key = [[44, -0.18], [64, -0.14], [64, 0.14], [44, 0.18]].map(([r, t]) => project(hx, hy, r, keyAngle + t));
  out += poly(ring(hx, hy, 52), '#64605c', 4) + poly(key, '#64605c', 4);
  return out;
}

document.getElementById('gears').innerHTML = gear(233, 1318, 3.6) + gear(568, 1511, 0.1);
```
